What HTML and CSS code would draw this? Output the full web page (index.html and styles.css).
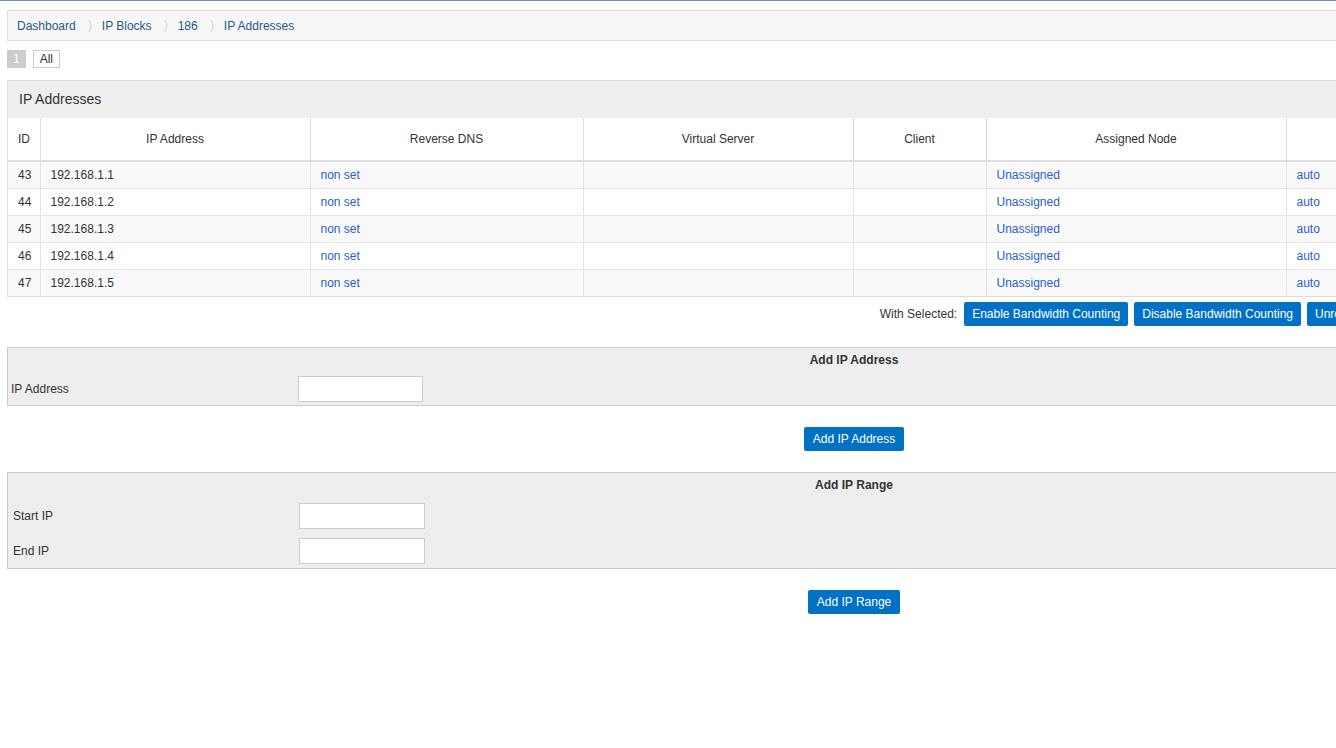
FILE: index.html
```html
<!DOCTYPE html>
<html lang="en">
<head>
  <meta charset="UTF-8">
  <title>IP Addresses</title>
  <link rel="stylesheet" href="styles.css">
</head>
<body>
  <div id="strona">
    <div class="crumbs">
      <a href="#">Dashboard</a><span class="sep">&#10217;</span><a href="#">IP Blocks</a><span class="sep">&#10217;</span><a href="#">186</a><span class="sep">&#10217;</span><a href="#">IP Addresses</a>
    </div>

    <div class="pager">
      <span class="cur">1</span>
      <a href="#" class="pg">All</a>
    </div>

    <div class="panel">
      <div class="panel-head">IP Addresses</div>
      <table class="grid">
        <colgroup>
          <col class="c-id"><col class="c-ip"><col class="c-dns"><col class="c-vs">
          <col class="c-cl"><col class="c-node"><col class="c-bw"><col class="c-res"><col class="c-act">
        </colgroup>
        <thead>
          <tr>
            <th>ID</th><th>IP Address</th><th>Reverse DNS</th><th>Virtual Server</th>
            <th>Client</th><th>Assigned Node</th><th>Bandwidth</th><th>Reserved</th><th>Edit</th>
          </tr>
        </thead>
        <tbody>
          <tr><td>43</td><td>192.168.1.1</td><td><a href="#">non set</a></td><td></td><td></td><td><a href="#">Unassigned</a></td><td><a href="#">auto</a></td><td>No</td><td><a href="#">edit</a></td></tr>
          <tr><td>44</td><td>192.168.1.2</td><td><a href="#">non set</a></td><td></td><td></td><td><a href="#">Unassigned</a></td><td><a href="#">auto</a></td><td>No</td><td><a href="#">edit</a></td></tr>
          <tr><td>45</td><td>192.168.1.3</td><td><a href="#">non set</a></td><td></td><td></td><td><a href="#">Unassigned</a></td><td><a href="#">auto</a></td><td>No</td><td><a href="#">edit</a></td></tr>
          <tr><td>46</td><td>192.168.1.4</td><td><a href="#">non set</a></td><td></td><td></td><td><a href="#">Unassigned</a></td><td><a href="#">auto</a></td><td>No</td><td><a href="#">edit</a></td></tr>
          <tr><td>47</td><td>192.168.1.5</td><td><a href="#">non set</a></td><td></td><td></td><td><a href="#">Unassigned</a></td><td><a href="#">auto</a></td><td>No</td><td><a href="#">edit</a></td></tr>
        </tbody>
      </table>
    </div>

    <div class="selected">
      <span class="sel-label">With Selected:</span>
      <button class="btn">Enable Bandwidth Counting</button>
      <button class="btn">Disable Bandwidth Counting</button>
      <button class="btn">Unreserve IP</button>
      <button class="btn">Reserve IP</button>
      <button class="btn">Assign To Node</button>
      <button class="btn">Delete Selected</button>
    </div>

    <table class="form">
      <colgroup><col class="f-lbl"><col></colgroup>
      <tr><td colspan="2" class="form-title">Add IP Address</td></tr>
      <tr class="form-row">
        <td class="lbl">IP Address</td>
        <td><input type="text" class="inp"></td>
      </tr>
    </table>
    <div class="form-btn"><button class="btn">Add IP Address</button></div>

    <table class="form">
      <colgroup><col class="f-lbl2"><col></colgroup>
      <tr><td colspan="2" class="form-title">Add IP Range</td></tr>
      <tr class="form-row range-row">
        <td class="lbl lbl2">Start IP</td>
        <td><input type="text" class="inp inp2"></td>
      </tr>
      <tr class="form-row range-row">
        <td class="lbl lbl2">End IP</td>
        <td><input type="text" class="inp inp2"></td>
      </tr>
    </table>
    <div class="form-btn"><button class="btn">Add IP Range</button></div>
  </div>
</body>
</html>
```

FILE: styles.css
```css
body {
  margin: 0;
  padding: 0;
  border-top: 1px solid #6a8fc2;
  font-family: "Liberation Sans", Arial, sans-serif;
  font-size: 12px;
  color: #333;
  background: #fff;
}

#strona {
  width: 1694px;
  padding: 9px 7px 40px;
}

a {
  text-decoration: none;
  color: #2a5fcc;
}

.crumbs {
  height: 29px;
  line-height: 29px;
  border: 1px solid #ddd;
  background-color: #f7f7f7;
  padding: 0 9px;
}

.crumbs a {
  color: #1d5a8c;
}

.crumbs .sep {
  font-family: "DejaVu Sans", sans-serif;
  color: #d4d4d4;
  font-size: 13px;
  margin: 0 9px 0 12px;
}

.pager {
  display: flex;
  gap: 7px;
  margin-top: 9px;
  height: 18px;
}

.pager .cur,
.pager .pg {
  display: block;
  height: 16px;
  line-height: 16px;
  padding: 0 5px;
  border: 1px solid #ccc;
}

.pager .cur {
  background-color: #ccc;
  color: #fff;
}

.pager .pg {
  padding: 0 6px;
  color: #333;
  background: #fff;
}

.panel {
  margin-top: 12px;
  border: 1px solid #ddd;
  border-top-width: 0;
}

.panel-head {
  height: 37px;
  line-height: 37px;
  border-top: 1px solid #ddd;
  background-color: #eee;
  font-size: 14px;
  padding: 0 11px;
}

.grid {
  width: 100%;
  border-collapse: collapse;
  table-layout: fixed;
}

.c-id { width: 32px; }
.c-ip { width: 270px; }
.c-dns { width: 273px; }
.c-vs { width: 270px; }
.c-cl { width: 133px; }
.c-node { width: 300px; }
.c-bw { width: 200px; }
.c-res { width: 150px; }

.grid th {
  font-weight: normal;
  text-align: center;
  padding: 14px 10px;
  line-height: 14px;
  border: 1px solid #ddd;
  border-bottom-width: 2px;
  border-top: 0;
  background: #fff;
}

.grid td {
  padding: 6px 10px;
  line-height: 14px;
  border: 1px solid #e4e4e4;
  white-space: nowrap;
}

.grid th:first-child,
.grid td:first-child {
  border-left: 0;
  padding-right: 0;
}

.grid th:first-child {
  text-align: left;
}

.grid th:last-child,
.grid td:last-child {
  border-right: 0;
  text-align: center;
}

.grid tbody tr:last-child td {
  border-bottom: 0;
}

.grid tbody tr:nth-child(odd) {
  background-color: #f9f9f9;
}

.selected {
  display: flex;
  justify-content: flex-end;
  align-items: center;
  gap: 6px;
  margin: 5px 14px 0 0;
}

.sel-label {
  margin-right: 1px;
}

.btn {
  font-family: "Liberation Sans", Arial, sans-serif;
  font-size: 12px;
  color: #fff;
  background-color: #0071c5;
  border: 0;
  border-radius: 2px;
  height: 24px;
  padding: 0 9px;
  cursor: pointer;
}

.selected .btn {
  padding: 0 8px;
}

.form {
  width: 100%;
  margin-top: 21px;
  border-collapse: collapse;
  table-layout: fixed;
  background-color: #eee;
  border: 1px solid #ccc;
}

.f-lbl { width: 290px; }
.f-lbl2 { width: 291px; }

.form-title {
  text-align: center;
  font-weight: bold;
  padding: 5px 4px;
  line-height: 14px;
}

.form-row td {
  padding: 4px 4px 3px 0;
}

.form-row td.lbl {
  padding-left: 3px;
}

.form-row td.lbl2 {
  padding-left: 5px;
}

.range-row td {
  padding-top: 6px;
  padding-bottom: 3px;
}

.range-row:last-child td {
  padding-bottom: 4px;
}

.inp {
  box-sizing: border-box;
  width: 125px;
  height: 26px;
  margin: 0;
  border: 1px solid #ccc;
  background: #fff;
}

.inp2 {
  width: 126px;
}

.form-btn {
  text-align: center;
  margin-top: 21px;
}

.form-btn + .form {
  margin-top: 21px;
}
```
